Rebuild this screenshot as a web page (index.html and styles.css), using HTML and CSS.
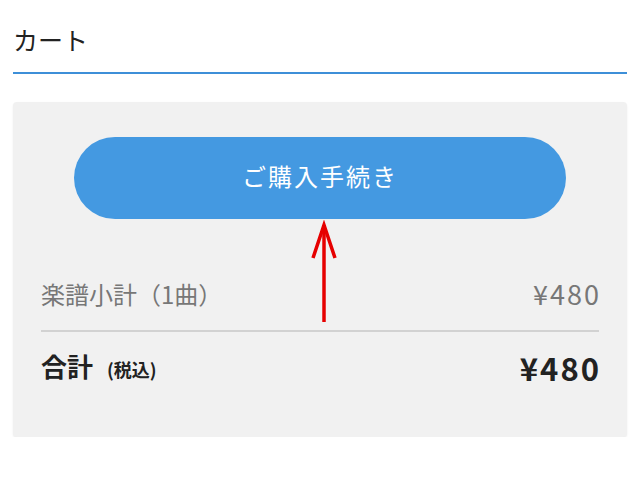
FILE: index.html
```html
<!DOCTYPE html>
<html lang="ja">
<head>
  <meta charset="UTF-8">
  <meta name="viewport" content="width=device-width, initial-scale=1.0">
  <title>カート</title>
  <link rel="stylesheet" href="styles.css">
</head>
<body>
  <div class="page">
    <h1 class="page-title">カート</h1>

    <div class="cart-box">
      <button class="btn-checkout">ご購入手続き</button>

      <svg class="hint-arrow" width="30" height="106" viewBox="0 0 30 106">
        <line x1="15" y1="5" x2="15" y2="102" />
        <polyline points="4,38 15,5 26,38" />
      </svg>

      <div class="summary-row subtotal">
        <span class="label">楽譜小計（1曲）</span>
        <span class="price">¥480</span>
      </div>

      <div class="summary-row total">
        <span class="label">合計<small class="tax-note">(税込)</small></span>
        <span class="price">¥480</span>
      </div>
    </div>
  </div>
</body>
</html>
```

FILE: styles.css
```css
:root {
  --accent-color: #3d8fd8;
  --button-color: #4499e1;
  --panel-color: #f1f1f1;
  --text-color: #222;
  --muted-color: #777;
}

* {
  margin: 0;
  padding: 0;
  box-sizing: border-box;
}

body {
  background: #fff;
  color: var(--text-color);
  font-family: "Noto Sans CJK JP", "Noto Sans", sans-serif;
}

.page {
  padding: 0 13px;
}

/* Title with blue underline */
.page-title {
  font-size: 25px;
  font-weight: 400;
  line-height: 36px;
  padding: 21px 0 15px;
  border-bottom: 2px solid var(--accent-color);
}

/* Gray cart panel */
.cart-box {
  position: relative;
  margin-top: 28px;
  height: 335px;
  padding: 35px 28px 0;
  background: var(--panel-color);
  border-radius: 4px;
  box-shadow: 0 1px 2px rgba(0, 0, 0, 0.08);
}

.btn-checkout {
  display: block;
  width: calc(100% - 66px);
  height: 82px;
  margin: 0 auto;
  padding-bottom: 6px;
  border: none;
  border-radius: 41px;
  background: var(--button-color);
  color: #fff;
  font-family: inherit;
  font-size: 24px;
  font-weight: 400;
  letter-spacing: 2px;
  cursor: pointer;
}

/* red annotation arrow pointing at the button */
.hint-arrow {
  position: absolute;
  left: 296px;
  top: 118px;
  fill: none;
  stroke: #e60000;
  stroke-width: 3.5;
}

.summary-row {
  display: flex;
  justify-content: space-between;
  align-items: center;
  line-height: 36px;
}

.price {
  letter-spacing: 2px;
  margin-right: -2px;
}

.subtotal {
  margin-top: 57px;
  padding-bottom: 18px;
  color: var(--muted-color);
  font-size: 24px;
  border-bottom: 2px solid #d2d2d2;
}

.subtotal .price {
  font-size: 27px;
}

.total {
  padding-top: 16px;
  font-size: 26px;
  font-weight: 700;
}

.total .price {
  font-size: 31px;
}

.tax-note {
  font-size: 18px;
  margin-left: 14px;
}
```
